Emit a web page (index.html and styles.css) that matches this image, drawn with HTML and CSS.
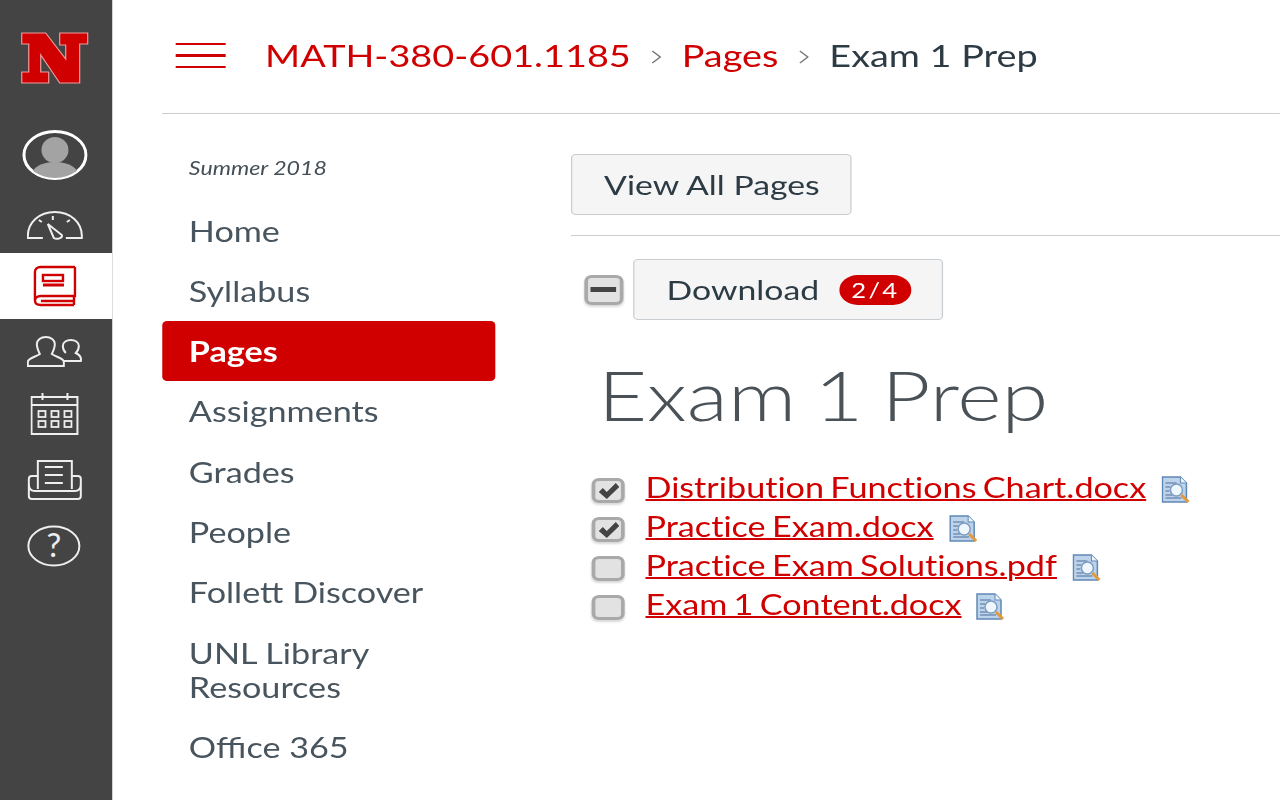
FILE: index.html
```html
<!DOCTYPE html>
<html lang="en">
<head>
<meta charset="utf-8">
<title>Exam 1 Prep</title>
<link rel="stylesheet" href="styles.css">
</head>
<body>
<div class="app">
  <aside class="rail">
    <div class="logo">
      <svg width="55.700" height="52" viewBox="0 0 68 52" preserveAspectRatio="none"><path d="M1 1H25L45 27V13H39V1H67V12H59V51H39L20 23V40H28V51H1V40H8V12H1Z" fill="#d00000" stroke="#f09a9a" stroke-width="1.200"/></svg>
    </div>
    <div class="avatar">
      <svg width="54.100" height="50" viewBox="0 0 66 50" preserveAspectRatio="none"><defs><clipPath id="c"><ellipse cx="33" cy="25" rx="30" ry="23"/></clipPath></defs><ellipse cx="33" cy="25" rx="31" ry="23.500" fill="#444" stroke="#fff" stroke-width="3"/><g clip-path="url(#c)" fill="#a3a3a3"><ellipse cx="33" cy="20" rx="13.500" ry="13"/><ellipse cx="33" cy="46" rx="24" ry="14"/></g></svg>
    </div>
    <div class="rail-item dash">
      <svg width="45.900" height="30" viewBox="0 0 56 30" preserveAspectRatio="none" fill="none" stroke="#eee" stroke-width="2"><path d="M16 28H1C0 12 13 2 28 2S56 12 55 28H39"/><path d="M21 14L35 25C36 28 30 30 27 28Z"/><path d="M26 6V10M12 10L15 12M43 10L40 12"/></svg>
    </div>
    <div class="rail-item active">
      <svg width="36.100" height="42" viewBox="0 0 44 42" preserveAspectRatio="none" fill="none" stroke="#d00000" stroke-width="2.400"><path d="M42 2H8C4 2 2 4 2 7V35C2 39 4 40 8 40H41M42 2V31H8C4 31 2 33 2 36M41 36H8M41 31V40"/><rect x="10" y="10" width="20" height="6"/><path d="M10 20H31" stroke-width="3"/></svg>
    </div>
    <div class="rail-item people">
      <svg width="45.900" height="32" viewBox="0 0 56 32" preserveAspectRatio="none" fill="none" stroke="#eee" stroke-width="2"><path d="M1 30V26C1 22 9 21 13 18C11 14 10 11 10 8C10 4 14 1 19 1S28 4 28 8C28 11 27 14 25 18C29 21 37 22 37 26V30Z"/><path d="M37 25H54C55 21 53 19 49 17C51 15 52 13 52 10C52 6 48 4 44 4S36 6 36 10C36 13 37 15 39 17"/></svg>
    </div>
    <div class="rail-item calendar">
      <svg width="39.300" height="44" viewBox="0 0 48 44" preserveAspectRatio="none" fill="none" stroke="#eee" stroke-width="2"><path d="M1 5H47V42H1ZM1 13H47M12 1V8M37 1V8"/><g stroke-width="1.800"><rect x="8" y="19" width="7" height="6"/><rect x="21" y="19" width="7" height="6"/><rect x="34" y="19" width="7" height="6"/><rect x="8" y="29" width="7" height="6"/><rect x="21" y="29" width="7" height="6"/><rect x="34" y="29" width="7" height="6"/></g></svg>
    </div>
    <div class="rail-item inbox">
      <svg width="45.900" height="40" viewBox="0 0 56 40" preserveAspectRatio="none" fill="none" stroke="#eee" stroke-width="2"><path d="M11 29V1H45V29M18 7H36M18 15H36M18 23H36"/><path d="M11 16H5C3 16 2 17 2 19V36C2 38 3 39 5 39H51C53 39 54 38 54 36V19C54 17 53 16 51 16H45M2 24C2 30 5 31 8 31H48C51 31 54 30 54 24"/></svg>
    </div>
    <div class="rail-item help">
      <svg width="44.300" height="42" viewBox="0 0 54 42" preserveAspectRatio="none" fill="none" stroke="#eee" stroke-width="2"><ellipse cx="27" cy="21" rx="25.500" ry="19.500"/><text x="27" y="32" text-anchor="middle" class="help-mark">?</text></svg>
    </div>
  </aside>
  <div class="main">
    <header class="topbar">
      <div class="burger"><span></span><span class="mid"></span><span></span></div>
      <nav class="crumbs">
        <a class="crumb-link">MATH-380-601.1185</a>
        <svg class="sep" width="9.800" height="16" viewBox="0 0 12 16" preserveAspectRatio="none" fill="none" stroke="#777" stroke-width="1.500"><path d="M2 2L10 8L2 14"/></svg>
        <a class="crumb-link">Pages</a>
        <svg class="sep" width="9.800" height="16" viewBox="0 0 12 16" preserveAspectRatio="none" fill="none" stroke="#777" stroke-width="1.500"><path d="M2 2L10 8L2 14"/></svg>
        <span class="crumb-current">Exam 1 Prep</span>
      </nav>
    </header>
    <div class="body">
      <nav class="course-nav">
        <div class="term">Summer 2018</div>
        <a class="nav-item">Home</a>
        <a class="nav-item">Syllabus</a>
        <a class="nav-item selected">Pages</a>
        <a class="nav-item">Assignments</a>
        <a class="nav-item">Grades</a>
        <a class="nav-item">People</a>
        <a class="nav-item">Follett Discover</a>
        <a class="nav-item">UNL Library<br>Resources</a>
        <a class="nav-item">Office 365</a>
      </nav>
      <main class="content">
        <div class="toolbar"><button class="btn">View All Pages</button></div>
        <div class="download-row">
          <span class="check minus"><span class="dash-mark"></span></span>
          <button class="btn download">Download <span class="badge">2/4</span></button>
        </div>
        <h1 class="title">Exam 1 Prep</h1>
        <ul class="files">
          <li class="file"><span class="check small"><svg width="18" height="18" viewBox="0 0 22 18" preserveAspectRatio="none"><path d="M1 10L5 6L9 10L18 1L21.500 5L9 17Z" fill="#444"/></svg></span><a class="file-link">Distribution Functions Chart.docx</a><svg class="doc" width="24.600" height="28" viewBox="0 0 30 28" preserveAspectRatio="none"><use href="#doc"/></svg></li>
          <li class="file"><span class="check small"><svg width="18" height="18" viewBox="0 0 22 18" preserveAspectRatio="none"><path d="M1 10L5 6L9 10L18 1L21.500 5L9 17Z" fill="#444"/></svg></span><a class="file-link">Practice Exam.docx</a><svg class="doc" width="24.600" height="28" viewBox="0 0 30 28" preserveAspectRatio="none"><use href="#doc"/></svg></li>
          <li class="file"><span class="check small"></span><a class="file-link">Practice Exam Solutions.pdf</a><svg class="doc" width="24.600" height="28" viewBox="0 0 30 28" preserveAspectRatio="none"><use href="#doc"/></svg></li>
          <li class="file"><span class="check small"></span><a class="file-link">Exam 1 Content.docx</a><svg class="doc" width="24.600" height="28" viewBox="0 0 30 28" preserveAspectRatio="none"><use href="#doc"/></svg></li>
        </ul>
      </main>
    </div>
  </div>
</div>
<svg class="defs" width="0" height="0"><defs><g id="doc"><path d="M1 1H19L25 7V26H1Z" fill="#bcd3ea" stroke="#5f88b6" stroke-width="1.500"/><path d="M19 1V7H25" fill="#eef4fa" stroke="#5f88b6"/><path d="M4 7H15M4 11H9M4 15H8M4 19H11M4 22H20" stroke="#4f6f9a" stroke-width="1.200"/><circle cx="15" cy="14" r="6" fill="#eef7fd" stroke="#7d9cc0" stroke-width="1.500"/><path d="M20 19L27 26" stroke="#e39a3a" stroke-width="3"/></g></defs></svg>
</body>
</html>
```

FILE: styles.css
```css
* { box-sizing: border-box; }
html, body { margin: 0; height: 100%; overflow: hidden; }
body { font-family: Lato, "Liberation Sans", sans-serif; color: #2d3b45; background: #fff; }
.app { display: flex; width: 1049.2px; height: 800px; transform: scale(1.22, 1); transform-origin: 0 0; }
.rail { width: 91.8px; flex: none; background: #444; display: flex; flex-direction: column; align-items: center; }
.logo { height: 127px; width: 100%; padding: 32px 1.5px 0 0; display: flex; align-items: flex-start; justify-content: center; }
.avatar { height: 56px; width: 100%; padding-right: 2px; display: flex; align-items: center; justify-content: center; }
.rail-item { display: flex; align-items: center; justify-content: center; width: 100%; height: 66px; padding-right: 2px; }
.dash { height: 70px; padding-top: 14px; }
.active { background: #fff; }
.people { padding-right: 1px; }
.calendar { height: 58px; }
.inbox { height: 74px; }
.help { height: 58px; padding-right: 3px; }
.help-mark { font: 33px Lato, sans-serif; fill: #eee; stroke: none; }
.main { flex: 1; min-width: 0; padding-left: 41px; }
.topbar { height: 114px; border-bottom: 1px solid #c7cdd1; display: flex; align-items: center; padding-left: 11.5px; }
.burger { width: 41px; height: 25px; margin-top: -3px; display: flex; flex-direction: column; justify-content: space-between; margin-right: 32px; }
.burger span { height: 2px; background: #d00000; }
.burger .mid { height: 3px; }
.crumbs { display: flex; align-items: center; font-size: 31px; margin-top: -3px; }
.crumb-link { color: #d00000; }
.crumb-current { color: #2d3b45; }
.sep { margin: 4px 16.4px 0 15.6px; }
.body { display: flex; }
.course-nav { width: 273px; flex: none; display: flex; flex-direction: column; padding-top: 40px; }
.term { font-size: 19px; font-style: italic; color: #444f57; padding-left: 22px; line-height: 28px; margin-bottom: 18.5px; }
.nav-item { font-size: 28px; line-height: 34px; padding: 13.15px 0 13.15px 22px; color: #48555e; border-radius: 4px; }
.selected { background: #d00000; color: #fff; font-weight: 700; }
.content { flex: 1; min-width: 0; margin-left: 62.3px; padding-top: 40px; }
.toolbar { padding-bottom: 20px; border-bottom: 1px solid #c7cdd1; }
.btn { font: 27.7px Lato, sans-serif; color: #2d3b45; background: #f5f5f5; border: 1px solid #c7cdd1; border-radius: 4px; height: 61px; width: 229.5px; padding: 0 0 0 26px; text-align: left; }
.download-row { display: flex; align-items: center; margin-top: 23px; padding-left: 10.7px; }
.check { display: flex; align-items: center; justify-content: center; background: #e2e2e2; border: 3px solid #a9a9a9; border-radius: 6px; box-shadow: 0 2px 2px rgba(0,0,0,.15); flex: none; }
.minus { width: 32px; height: 30px; margin-right: 8.6px; }
.dash-mark { width: 21px; height: 5px; background: #444; }
.download { width: 253.6px; display: flex; align-items: center; }
.badge { display: inline-block; width: 58.2px; height: 30px; margin-left: 17px; border-radius: 15px; background: #d00000; color: #fff; font-size: 21px; line-height: 30px; letter-spacing: 1.9px; text-align: center; }
.title { margin: 31px 0 0 22px; font-size: 69.5px; font-weight: 300; line-height: 86px; color: #4a5258; word-spacing: -4px; }
.files { list-style: none; margin: 30px 0 0 17px; padding: 0; }
.file { display: flex; align-items: center; height: 39px; }
.small { width: 27px; height: 25px; margin-right: 17px; margin-top: 8px; }
.file-link { color: #d00000; font-size: 28px; text-decoration: underline; text-decoration-thickness: 2px; font-variant-ligatures: none; word-spacing: -2px; }
.doc { margin-left: 12.3px; margin-top: 6px; }
.defs { position: absolute; }
```
